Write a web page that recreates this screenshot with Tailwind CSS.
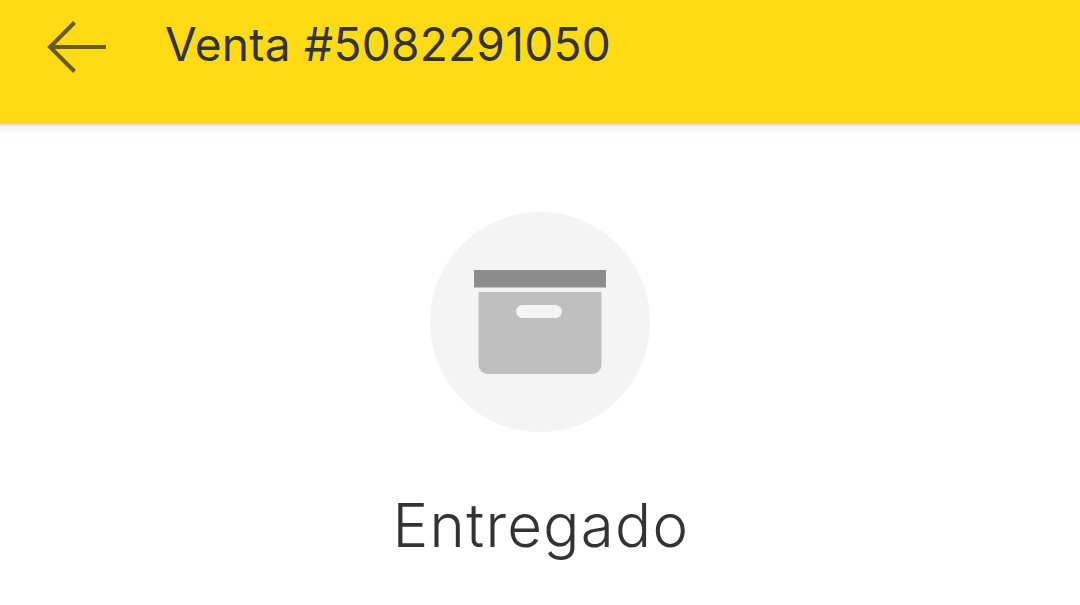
<!doctype html>
<html lang="es">
    <head>
        <meta charset="utf-8" />
        <title>Venta #5082291050</title>
        <script src="https://cdn.jsdelivr.net/npm/@tailwindcss/browser@4"></script>
    </head>
    <body class="h-screen overflow-hidden bg-white text-[#333333]">
        <header
            class="-mx-5 flex h-[124px] items-start bg-[#ffdb15] pl-[66px] shadow-[0_1px_2px_rgba(0,0,0,0.12),0_4px_12px_rgba(0,0,0,0.08)]"
        >
            <a href="#" class="mt-[20px]" aria-label="Volver">
                <svg
                    class="h-[54px] w-[62px]"
                    viewBox="0 0 62 54"
                    fill="none"
                    stroke="#665c1c"
                    stroke-width="4"
                >
                    <path d="M28.5 2.5L4 27l24.500 24.500M4 27h56" />
                </svg>
            </a>
            <h1
                class="mt-[14px] ml-[57px] font-[Inter,sans-serif] text-[46px] leading-[60px] font-normal tracking-[0.27px] whitespace-nowrap"
            >
                Venta #5082291050
            </h1>
        </header>
        <main class="flex flex-col items-center pt-[88px]">
            <div
                class="flex size-[220px] justify-center rounded-full bg-[#f4f4f4] pt-[58px]"
            >
                <svg class="h-[104px] w-[132px]" viewBox="0 0 132 104">
                    <path fill="#8c8c8c" d="M0 0h132v17.500H0z" />
                    <path
                        fill="#bfbfbf"
                        d="M4.500 22h123v73a9 9 0 0 1-9 9h-105a9 9 0 0 1-9-9z"
                    />
                    <rect
                        x="42"
                        y="35"
                        width="46"
                        height="13"
                        rx="6.500"
                        fill="#f4f4f4"
                    />
                </svg>
            </div>
            <h2
                class="mt-[53px] pl-[2px] font-[Inter,sans-serif] text-[60px] leading-[80px] font-light tracking-[1.3px] whitespace-nowrap"
            >
                Entregado
            </h2>
        </main>
    </body>
</html>
